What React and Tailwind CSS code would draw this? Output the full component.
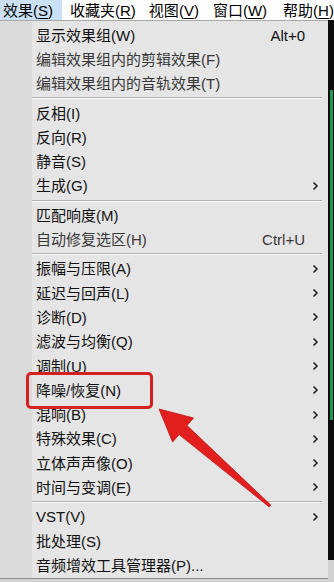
import React from "react";

const FONT = { fontFamily: '"Liberation Sans", "Noto Sans CJK SC", sans-serif' };

function Chevron() {
  return (
    <svg width="7" height="10" viewBox="0 0 7 10" className="block">
      <path d="M1.5 1.5 L5 5 L1.5 8.5" fill="none" stroke="#222" strokeWidth="1.6" />
    </svg>
  );
}

function Item({ label, shortcut, sub, dim }) {
  return (
    <div className={"flex h-[24.3px] items-center " + (dim ? "text-[#383838]" : "text-[#111111]")}>
      <div className="flex-1 pl-[4px] text-[15px] leading-none whitespace-nowrap">{label}</div>
      {shortcut && <div className="text-[15px] leading-none whitespace-nowrap">{shortcut}</div>}
      <div className="w-[23px] h-full flex items-center pl-[7px]">{sub && <Chevron />}</div>
    </div>
  );
}

function Sep() {
  return (
    <div className="h-[5px] flex flex-col justify-center pr-[6px]">
      <div className="h-px bg-[#b2b2b2]" />
      <div className="h-px bg-[#f6f6f6]" />
    </div>
  );
}

function Mn({ t, k }) {
  return (
    <span className="whitespace-nowrap">
      {t}(<span className="underline underline-offset-2">{k}</span>)
    </span>
  );
}

export default function App() {
  const groups = [
    [
      { label: "显示效果组(W)", shortcut: "Alt+0" },
      { label: "编辑效果组内的剪辑效果(F)", dim: true },
      { label: "编辑效果组内的音轨效果(T)", dim: true },
    ],
    [
      { label: "反相(I)" },
      { label: "反向(R)" },
      { label: "静音(S)" },
      { label: "生成(G)", sub: true },
    ],
    [
      { label: "匹配响度(M)" },
      { label: "自动修复选区(H)", shortcut: "Ctrl+U", dim: true },
    ],
    [
      { label: "振幅与压限(A)", sub: true },
      { label: "延迟与回声(L)", sub: true },
      { label: "诊断(D)", sub: true },
      { label: "滤波与均衡(Q)", sub: true },
      { label: "调制(U)", sub: true },
      { label: "降噪/恢复(N)", sub: true },
      { label: "混响(B)", sub: true },
      { label: "特殊效果(C)", sub: true },
      { label: "立体声声像(O)", sub: true },
      { label: "时间与变调(E)", sub: true },
    ],
    [
      { label: "VST(V)", sub: true },
      { label: "批处理(S)" },
      { label: "音频增效工具管理器(P)..." },
    ],
  ];

  const tip = [159, 409];
  const tail = [270, 506];
  const dx = tail[0] - tip[0];
  const dy = tail[1] - tip[1];
  const len = Math.hypot(dx, dy);
  const d = [dx / len, dy / len];
  const p = [-d[1], d[0]];
  const headLen = 32;
  const headW = 16;
  const base = [tip[0] + d[0] * headLen, tip[1] + d[1] * headLen];
  const pt = (c, w) => [c[0] + p[0] * w, c[1] + p[1] * w];
  const pts = [
    tip,
    pt(base, headW),
    pt(base, 6),
    pt(tail, 1.2),
    pt(tail, -1.2),
    pt(base, -6),
    pt(base, -headW),
  ]
    .map((q) => q[0].toFixed(1) + "," + q[1].toFixed(1))
    .join(" ");

  return (
    <div className="relative w-[334px] h-[582px] overflow-hidden bg-[#d2d2d2]" style={FONT}>
      {/* menu bar */}
      <div className="flex h-[20px] bg-white text-[15px] leading-none text-black items-center">
        <div className="h-full w-[62px] flex items-center pl-[3px] bg-[#c9e0f5]">
          <Mn t="效果" k="S" />
        </div>
        <div className="h-full flex items-center ml-[8px]">
          <Mn t="收藏夹" k="R" />
        </div>
        <div className="h-full flex items-center ml-[13px]">
          <Mn t="视图" k="V" />
        </div>
        <div className="h-full flex items-center ml-[14px]">
          <Mn t="窗口" k="W" />
        </div>
        <div className="h-full flex items-center ml-[16px]">
          <Mn t="帮助" k="H" />
        </div>
      </div>

      {/* menu + right strip */}
      <div className="flex h-[559px]">
        <div className="flex w-[328px] h-full border-t border-[#a8a8a8] border-b border-b-[#8a8a8a] bg-[#e5e5e5]">
          <div className="w-[32px] h-full bg-[#dadada]" />
          <div className="flex-1 pt-[2px]">
            {groups.map((g, gi) => (
              <React.Fragment key={gi}>
                {gi > 0 && <Sep />}
                {g.map((it, i) => (
                  <Item key={i} {...it} />
                ))}
              </React.Fragment>
            ))}
          </div>
        </div>
        <div className="flex-1 h-[540px] bg-[#0c0c0c] flex justify-center pt-[70px]">
          <div className="w-[3px] h-[330px] bg-[#1f9a55]" />
        </div>
      </div>

      {/* red highlight box */}
      <div className="absolute left-[26px] top-[372px] w-[127px] h-[37px] border-[3.5px] border-[#d42020] rounded-[5px]" />

      {/* red arrow */}
      <svg className="absolute left-0 top-0 pointer-events-none" width="334" height="582">
        <polygon points={pts} fill="#e21f1f" stroke="#c01515" strokeWidth="0.8" strokeLinejoin="round" />
      </svg>
    </div>
  );
}
